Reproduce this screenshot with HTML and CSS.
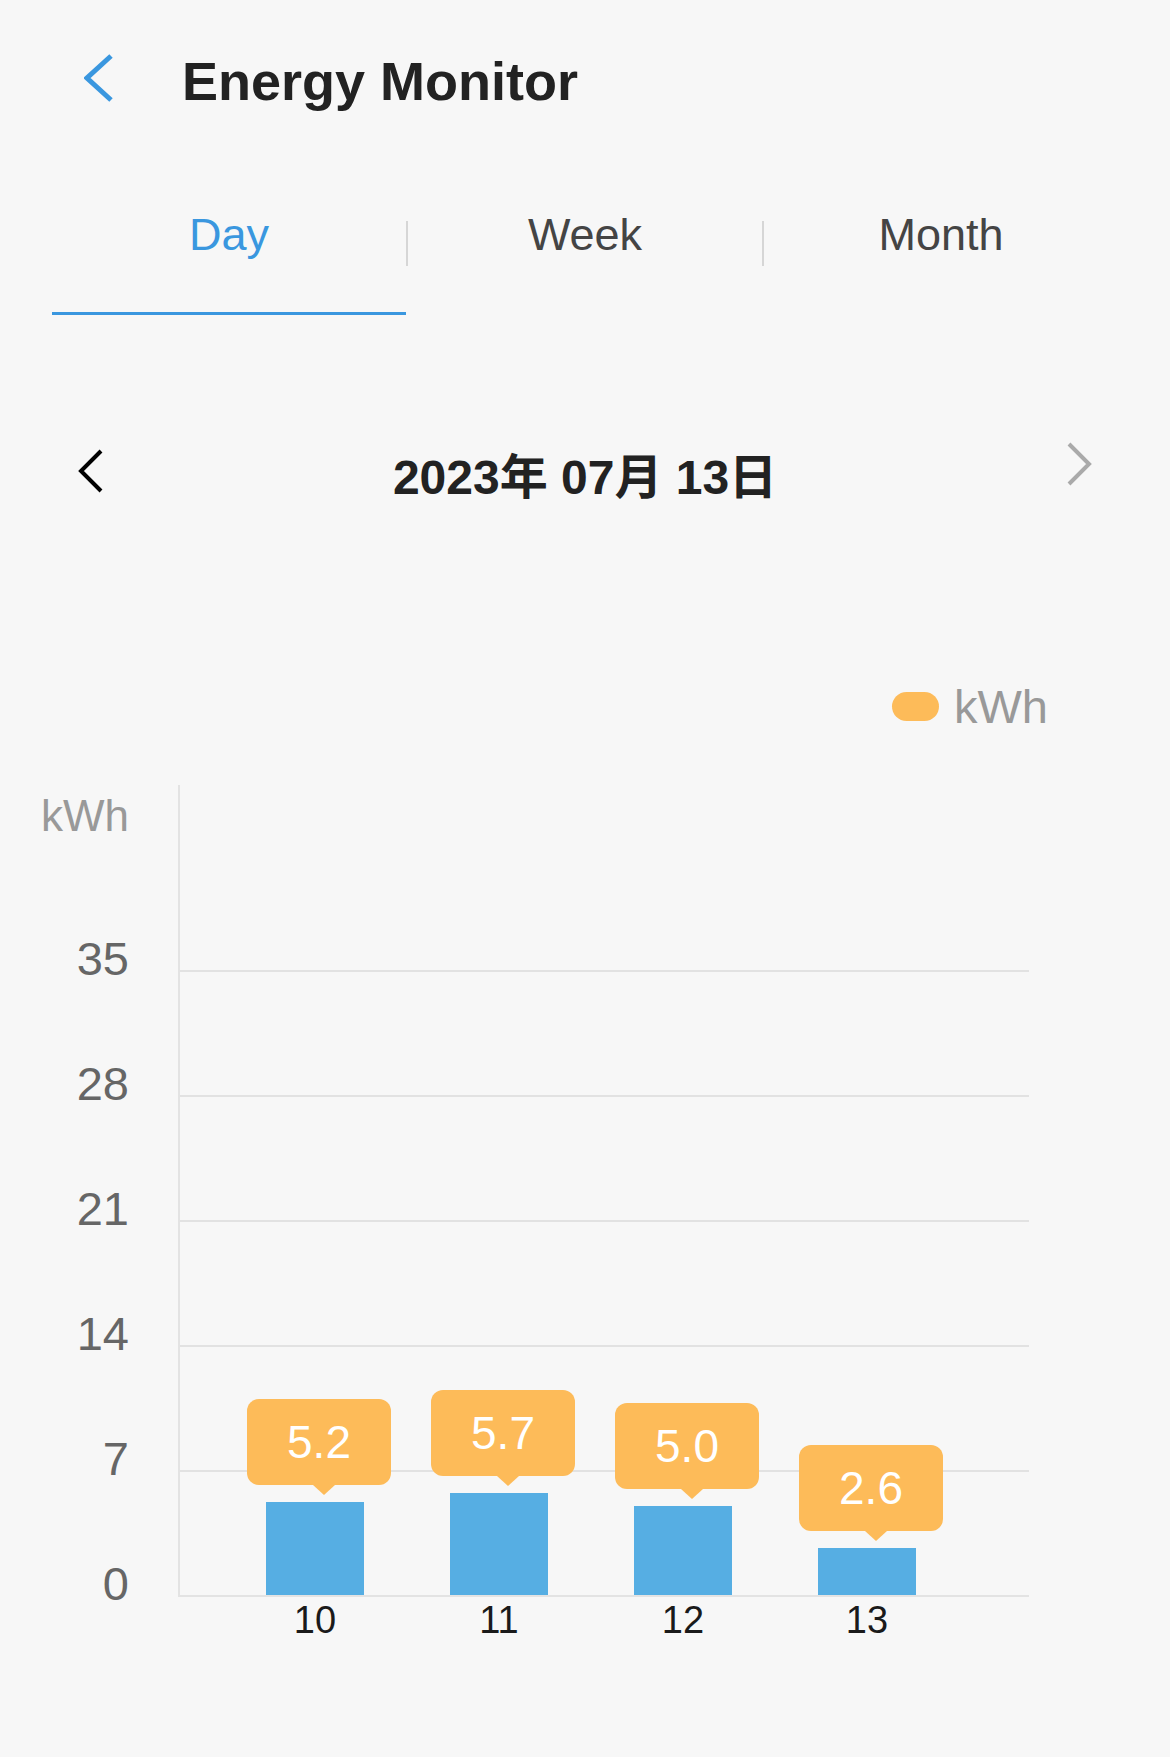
FILE: index.html
```html
<!DOCTYPE html>
<html lang="ja">
<head>
<meta charset="UTF-8" />
<title>Energy Monitor</title>
<link rel="stylesheet" href="styles.css">
</head>
<body>

<div class="topbar">
  <svg class="back" width="30" height="48" viewBox="0 0 30 48">
    <polyline points="27,2 3,24 27,46" fill="none" stroke="#3a97df" stroke-width="5" />
  </svg>
  <h1 class="title">Energy Monitor</h1>
</div>

<div class="tabs">
  <div class="tab active">Day</div>
  <div class="tab-sep"></div>
  <div class="tab">Week</div>
  <div class="tab-sep"></div>
  <div class="tab">Month</div>
</div>

<div class="date-row">
  <svg class="prev" width="26" height="44" viewBox="0 0 26 44">
    <polyline points="23,2 3,22 23,42" fill="none" stroke="#000" stroke-width="4" />
  </svg>
  <div class="date">2023年 07月 13日</div>
  <svg class="next" width="26" height="44" viewBox="0 0 26 44">
    <polyline points="3,2 23,22 3,42" fill="none" stroke="#aaa" stroke-width="4" />
  </svg>
</div>

<div class="legend">
  <span class="legend-dot"></span>
  <span class="legend-label">kWh</span>
</div>

<div class="chart">
  <div class="y-axis">
    <div class="y-unit">kWh</div>
    <div class="tick">35</div>
    <div class="tick">28</div>
    <div class="tick">21</div>
    <div class="tick">14</div>
    <div class="tick">7</div>
    <div class="tick last">0</div>
  </div>
  <div class="plot-col">
    <div class="plot">
      <div class="grid-lines">
        <div class="grid-row"></div>
        <div class="grid-row"></div>
        <div class="grid-row"></div>
        <div class="grid-row"></div>
        <div class="grid-row"></div>
      </div>
      <div class="bars">
        <div class="bar" style="height:93px"><div class="tip">5.2</div></div>
        <div class="bar" style="height:102px"><div class="tip">5.7</div></div>
        <div class="bar" style="height:89px"><div class="tip">5.0</div></div>
        <div class="bar" style="height:47px"><div class="tip">2.6</div></div>
      </div>
    </div>
    <div class="x-labels">
      <div class="x-label">10</div>
      <div class="x-label">11</div>
      <div class="x-label">12</div>
      <div class="x-label">13</div>
    </div>
  </div>
</div>

</body>
</html>
```

FILE: styles.css
```css
body {
  margin: 0;
  background: #f7f7f7;
  font-family: "Liberation Sans", "Noto Sans CJK JP", sans-serif;
  color: #222;
}

/* top bar */
.topbar {
  display: flex;
  align-items: flex-start;
  padding: 54px 0 0 84px;
}
.back {
  display: block;
}
.title {
  margin: -3px 0 0 68px;
  font-size: 54px;
  line-height: 60px;
  font-weight: bold;
  color: #222;
}

/* tabs */
.tabs {
  display: flex;
  margin: 65px 52px 0;
}
.tab {
  flex: 1;
  text-align: center;
  font-size: 45px;
  line-height: 45px;
  color: #444;
  padding: 36px 0 55px;
  border-bottom: 3px solid transparent;
}
.tab.active {
  color: #3a97df;
  border-bottom-color: #3a97df;
}
.tab-sep {
  width: 2px;
  height: 45px;
  margin-top: 45px;
  background: #d6d6d6;
}

/* date switcher */
.date-row {
  display: flex;
  justify-content: space-between;
  align-items: flex-start;
  padding: 0 78px;
  margin-top: 127px;
}
.prev {
  margin-top: 7px;
}
.date {
  margin-top: 8px;
  font-size: 48px;
  line-height: 56px;
  font-weight: bold;
  color: #222;
}

/* legend */
.legend {
  display: flex;
  justify-content: flex-end;
  align-items: center;
  padding-right: 122px;
  margin-top: 178px;
}
.legend-dot {
  width: 47px;
  height: 29px;
  border-radius: 15px;
  background: #fdbb59;
  margin-right: 15px;
}
.legend-label {
  font-size: 47px;
  line-height: 45px;
  color: #999;
}

/* chart */
.chart {
  display: flex;
  margin-top: 56px;
}
.y-axis {
  width: 129px;
  margin-right: 49px;
  display: flex;
  flex-direction: column;
  align-items: flex-end;
  padding-top: 9px;
}
.y-unit {
  font-size: 44px;
  line-height: 44px;
  color: #999;
  margin-bottom: 98px;
}
.tick {
  height: 125px;
  font-size: 47px;
  line-height: 46px;
  color: #666;
}
.tick.last {
  height: auto;
}
.plot-col {
  width: 851px;
}
.plot {
  display: grid;
  height: 812px;
  box-sizing: border-box;
  border-left: 2px solid #e3e3e3;
  border-bottom: 2px solid #e3e3e3;
}
.plot > div {
  grid-area: 1 / 1;
}
.grid-lines {
  display: flex;
  flex-direction: column;
  padding-top: 185px;
}
.grid-row {
  height: 125px;
  box-sizing: border-box;
  border-top: 2px solid #e2e2e2;
}
.bars {
  display: flex;
  align-items: flex-end;
  gap: 86px;
  padding-left: 86px;
}
.bar {
  position: relative;
  width: 98px;
  background: #56aee3;
}
.tip {
  position: absolute;
  bottom: calc(100% + 17px);
  left: calc(50% + 4px);
  transform: translateX(-50%);
  width: 144px;
  height: 86px;
  border-radius: 12px;
  background: #fdbb59;
  color: #fff;
  font-size: 46px;
  display: flex;
  align-items: center;
  justify-content: center;
}
.tip::after {
  content: "";
  position: absolute;
  top: 100%;
  left: calc(50% + 5px);
  margin-left: -11px;
  border-left: 11px solid transparent;
  border-right: 11px solid transparent;
  border-top: 10px solid #fdbb59;
}
.x-labels {
  display: flex;
  gap: 86px;
  padding-left: 88px;
  margin-top: 3px;
}
.x-label {
  width: 98px;
  text-align: center;
  font-size: 38px;
  line-height: 40px;
  color: #1a1a1a;
}
```
